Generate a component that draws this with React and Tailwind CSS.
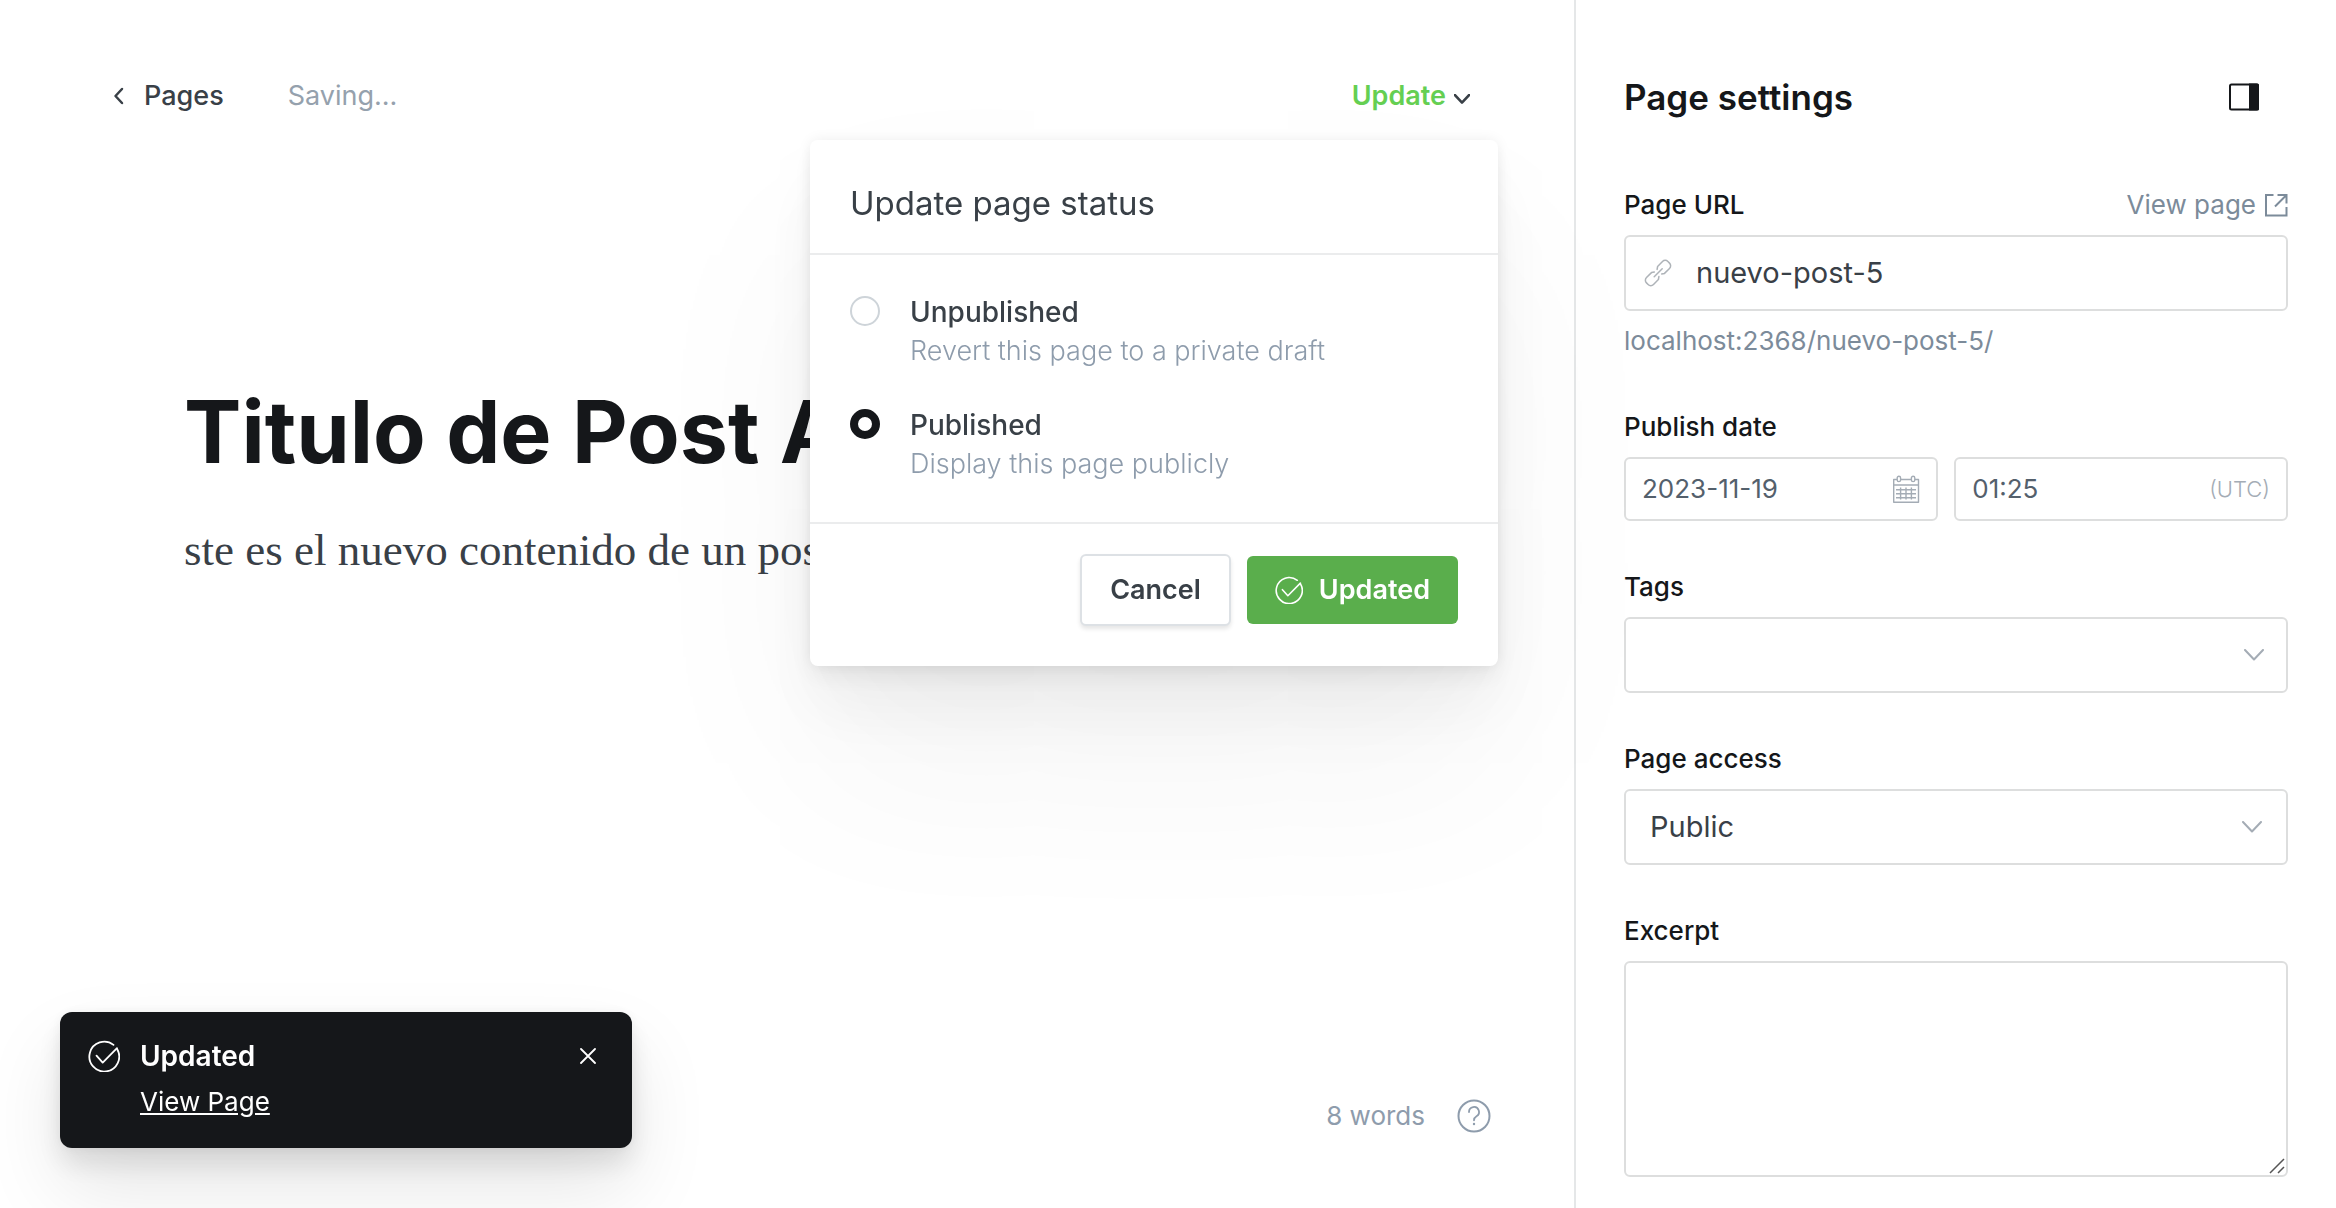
import React, { useState } from "react";

function CheckCircle({ className, width = 1.5 }) {
  return (
    <svg viewBox="0 0 32 32" className={className} fill="none" stroke="currentColor" strokeWidth={width} strokeLinecap="round" strokeLinejoin="round" aria-hidden="true">
      <path d="M25.5 4.9A14.9 14.9 0 1 0 29.1 9" />
      <path d="M8.5 15.6l6.2 7L29 8.2" />
    </svg>
  );
}

function ChevronDown({ className, width = 2 }) {
  return (
    <svg viewBox="0 0 20 12" className={className} fill="none" stroke="currentColor" strokeWidth={width} strokeLinecap="round" strokeLinejoin="round" aria-hidden="true">
      <path d="M1 1l9 9.5L19 1" />
    </svg>
  );
}

function LinkIcon() {
  return (
    <svg viewBox="0 0 28 28" className="size-7 shrink-0 text-[#aeb3b8]" fill="none" stroke="currentColor" strokeWidth="1.5" strokeLinecap="round" strokeLinejoin="round" aria-hidden="true">
      <path d="M10.2 17.8l8-8" />
      <path d="M14.9 17.6l-.5 2.9-4.9 5a3.8 3.8 0 0 1-5.4 0l-1.6-1.6a3.8 3.8 0 0 1 0-5.4l5-4.9 2.8-.5" />
      <path d="M13.1 10.4l.5-2.9 4.9-5a3.8 3.8 0 0 1 5.4 0l1.6 1.6a3.8 3.8 0 0 1 0 5.4l-5 4.9-2.8.5" />
    </svg>
  );
}

function CalendarIcon() {
  return (
    <svg viewBox="0 0 28 28" className="size-7 shrink-0 text-[#a4acb5]" fill="none" stroke="currentColor" strokeWidth="1.4" strokeLinejoin="round" aria-hidden="true">
      <path d="M5 4.5H1.7v22.8h24.8V4.5H23M8.5 4.5h11M1.7 10h24.8" />
      <rect x="5.2" y="1.2" width="3.4" height="5.4" rx="1.7" />
      <rect x="19.4" y="1.2" width="3.4" height="5.4" rx="1.7" />
      <path d="M8.6 12.5v12M14 12.5v12M19.4 12.5v12M4 14.7h20M4 18.7h20M4 22.7h20" />
    </svg>
  );
}

function ExternalIcon() {
  return (
    <svg viewBox="0 0 24 24" className="size-6 shrink-0" fill="none" stroke="currentColor" strokeWidth="2" aria-hidden="true">
      <path d="M9.5 2H2v20.500h20.500V14" />
      <path d="M13.500 2h9v8.500M22.500 2L11 13.500" />
    </svg>
  );
}

const box = "w-full rounded-md border-2 border-[#dddede] bg-white outline-none";

function Field({ label, htmlFor, aside, children }) {
  return (
    <div className="flex flex-col gap-3.5">
      <div className="flex items-center justify-between">
        <label htmlFor={htmlFor} className="text-[26px] leading-8 font-medium text-[#15171a]">{label}</label>
        {aside}
      </div>
      {children}
    </div>
  );
}

function StatusOption({ id, title, text, checked, onSelect }) {
  return (
    <label htmlFor={id} className="flex gap-[30px]">
      <input
        id={id}
        type="radio"
        name="status"
        checked={checked}
        onChange={onSelect}
        className="size-[30px] shrink-0 appearance-none rounded-full border-2 border-[#ced4d9] bg-white checked:border-8 checked:border-[#15171a]"
      />
      <span className="flex flex-col gap-[7px]">
        <span className="text-[28px] leading-8 font-medium text-[#394047]">{title}</span>
        <span className="text-[27px] leading-8 font-light text-[#8e9cac]">{text}</span>
      </span>
    </label>
  );
}

function StatusMenu() {
  const [status, setStatus] = useState("published");
  return (
    <div role="dialog" aria-labelledby="status-title" className="absolute top-full -right-7 z-10 mt-7 w-[688px] rounded-lg bg-white shadow-[0_0_14px_rgba(0,0,0,0.07),0_12px_24px_rgba(0,0,0,0.06),0_44px_70px_rgba(0,0,0,0.05),0_100px_190px_rgba(0,0,0,0.05)]">
      <h2 id="status-title" className="border-b-2 border-[#ebeced] px-10 pt-[43px] pb-[30px] text-[33px] leading-10 text-[#394047]">Update page status</h2>
      <div className="flex flex-col gap-[42px] border-b-2 border-[#ebeced] px-10 pt-[41px] pb-[42px]">
        <StatusOption id="unpublished" title="Unpublished" text="Revert this page to a private draft" checked={status === "unpublished"} onSelect={() => setStatus("unpublished")} />
        <StatusOption id="published" title="Published" text="Display this page publicly" checked={status === "published"} onSelect={() => setStatus("published")} />
      </div>
      <div className="flex items-center justify-end gap-4 px-10 pt-[30px] pb-10">
        <button type="button" className="h-[72px] rounded-md border-2 border-[#dde1e5] bg-white px-7 text-[27px] leading-8 font-semibold text-[#394047] shadow-[0_3px_4px_rgba(0,0,0,0.1)]">Cancel</button>
        <button type="button" className="flex h-[68px] items-center gap-4 rounded-md bg-[#5aae4c] px-7 text-[27px] leading-8 font-semibold text-white">
          <CheckCircle className="size-7" width={1.8} />
          Updated
        </button>
      </div>
    </div>
  );
}

function Editor() {
  return (
    <main className="flex min-w-0 flex-1 flex-col">
      <header className="flex items-center justify-between pt-20 pr-[104px] pl-28 text-[27px] leading-8">
        <div className="flex items-center gap-16">
          <a href="#pages" className="flex items-center gap-5 font-medium text-[#394047]">
            <svg viewBox="0 0 12 18" className="h-[18px] w-3" fill="none" stroke="currentColor" strokeWidth="2.5" strokeLinecap="round" strokeLinejoin="round" aria-hidden="true">
              <path d="M10 2L3.500 9l6.500 7" />
            </svg>
            Pages
          </a>
          <span className="text-[#95a1ad]">Saving...</span>
        </div>
        <div className="relative">
          <button type="button" className="flex items-center gap-2 font-semibold text-[#65cf52]">
            Update
            <ChevronDown className="mt-1.5 h-2.5 w-4 text-[#394047]" width={3.2} />
          </button>
          <StatusMenu />
        </div>
      </header>
      <article className="flex-1 px-[184px] pt-[264px]">
        <h1 className="text-[86px] leading-[112px] font-bold whitespace-nowrap text-[#15171a]">Titulo de Post A</h1>
        <p className="mt-8 font-['Liberation_Serif',serif] text-[45px] leading-[60px] whitespace-nowrap text-[#394047]">ste es el nuevo contenido de un post</p>
      </article>
      <footer className="flex items-center justify-end gap-8 pr-[83px] pb-[76px] text-[26px] leading-8 text-[#8e9cac]">
        <span>8 words</span>
        <button type="button" aria-label="Help">
          <svg viewBox="0 0 34 34" className="size-[34px]" fill="none" stroke="currentColor" strokeWidth="2" strokeLinecap="round" aria-hidden="true">
            <circle cx="17" cy="17" r="15.5" />
            <path d="M12 13a5 5 0 1 1 7.500 4.300c-1.700 1-2.500 1.900-2.500 4" strokeWidth="1.8" />
            <circle cx="17" cy="25" r="1.2" fill="currentColor" stroke="none" />
          </svg>
        </button>
      </footer>
    </main>
  );
}

function Settings() {
  return (
    <aside className="w-[762px] shrink-0 border-l-2 border-[#e5e7e8] px-12 pt-[77px] pb-8">
      <div className="flex items-center justify-between pr-7">
        <h2 className="text-[35px] leading-10 font-semibold text-[#15171a]">Page settings</h2>
        <button type="button" aria-label="Toggle settings panel">
          <svg viewBox="0 0 32 28" className="h-7 w-8" aria-hidden="true">
            <rect x="2" y="1.5" width="28" height="25" rx="1.5" fill="none" stroke="#15171a" strokeWidth="2" />
            <path d="M21 .5h8.500a1.500 1.500 0 0 1 1.500 1.500v24a1.500 1.500 0 0 1-1.500 1.500H21z" fill="#15171a" />
          </svg>
        </button>
      </div>
      <form className="mt-[72px] flex flex-col gap-[50px]">
        <div>
          <Field
            label="Page URL"
            htmlFor="url"
            aside={
              <a href="#view" className="flex items-center gap-2 text-[26px] leading-8 text-[#7c8b9a]">
                View page
                <ExternalIcon />
              </a>
            }
          >
            <div className={`${box} flex h-[76px] items-center gap-6 px-[18px]`}>
              <LinkIcon />
              <input id="url" type="text" defaultValue="nuevo-post-5" className="min-w-0 flex-1 text-[29px] leading-9 text-[#394047] outline-none" />
            </div>
          </Field>
          <p className="mt-3 pb-0.5 text-[26px] leading-9 text-[#7c8b9a]">localhost:2368/nuevo-post-5/</p>
        </div>
        <Field label="Publish date" htmlFor="date">
          <div className="flex gap-4">
            <div className={`${box} flex h-16 min-w-0 flex-[314] items-center px-4`}>
              <input id="date" type="text" defaultValue="2023-11-19" className="min-w-0 flex-1 text-[26px] leading-8 text-[#54606c] outline-none" />
              <CalendarIcon />
            </div>
            <div className={`${box} flex h-16 min-w-0 flex-[336] items-center px-4`}>
              <input aria-label="Publish time" type="text" defaultValue="01:25" className="min-w-0 flex-1 text-[26px] leading-8 text-[#54606c] outline-none" />
              <span className="text-[22px] leading-8 font-light text-[#a4acb5]">(UTC)</span>
            </div>
          </div>
        </Field>
        <Field label="Tags" htmlFor="tags">
          <div className={`${box} flex h-[76px] items-center pr-[22px] pl-6`}>
            <input id="tags" type="text" className="min-w-0 flex-1 text-[29px] leading-9 text-[#394047] outline-none" />
            <ChevronDown className="h-3 w-5 text-[#a4acb5]" />
          </div>
        </Field>
        <Field label="Page access" htmlFor="access">
          <div className="grid items-center">
            <select id="access" defaultValue="Public" className={`${box} col-start-1 row-start-1 h-[76px] appearance-none px-6 text-[29px] leading-9 text-[#394047]`}>
              <option>Public</option>
            </select>
            <ChevronDown className="pointer-events-none col-start-1 row-start-1 mr-[26px] h-3 w-5 justify-self-end text-[#a4acb5]" />
          </div>
        </Field>
        <Field label="Excerpt" htmlFor="excerpt">
          <div className="grid">
            <textarea id="excerpt" className={`${box} col-start-1 row-start-1 h-[216px] resize-none p-4 text-[29px] leading-9 text-[#394047]`} />
            <svg viewBox="0 0 16 16" className="pointer-events-none col-start-1 row-start-1 mr-[3px] mb-[3px] size-4 self-end justify-self-end" stroke="#555" strokeWidth="1.5" aria-hidden="true">
              <path d="M1 15L15 1M9 15l6-6" />
            </svg>
          </div>
        </Field>
      </form>
    </aside>
  );
}

function Toast() {
  return (
    <div role="status" className="fixed bottom-[60px] left-[60px] flex w-[572px] items-start gap-5 rounded-xl bg-[#15171a] px-7 pt-7 pb-7 text-white shadow-[0_0_14px_rgba(0,0,0,0.05),0_16px_28px_rgba(0,0,0,0.1),0_40px_80px_rgba(0,0,0,0.1)]">
      <CheckCircle className="size-8 shrink-0" width={1.8} />
      <div className="flex flex-1 flex-col items-start gap-3">
        <strong className="text-[28px] leading-8 font-semibold">Updated</strong>
        <a href="#view" className="text-[26px] leading-9 underline">View Page</a>
      </div>
      <button type="button" aria-label="Close" className="mt-2 mr-2">
        <svg viewBox="0 0 16 16" className="size-4" stroke="currentColor" strokeWidth="1.8" strokeLinecap="round" aria-hidden="true">
          <path d="M1 1l14 14M15 1L1 15" />
        </svg>
      </button>
    </div>
  );
}

export default function App() {
  return (
    <div className="flex min-h-screen overflow-x-hidden bg-white font-['Inter',sans-serif]">
      <Editor />
      <Settings />
      <Toast />
    </div>
  );
}
